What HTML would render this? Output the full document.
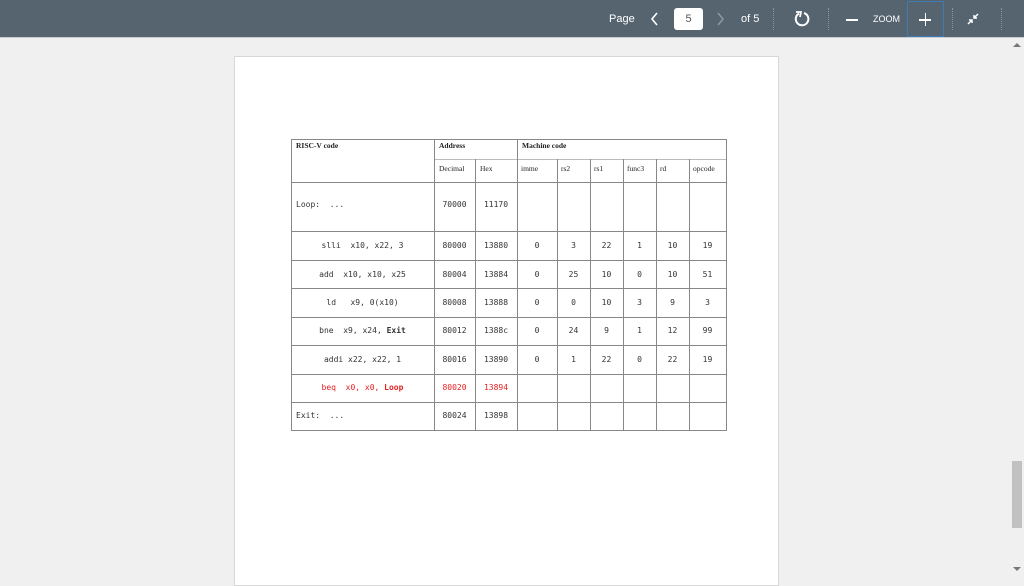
<!DOCTYPE html><html><head><style>
*{margin:0;padding:0;box-sizing:border-box}
body{width:1024px;height:576px;overflow:hidden;background:#f0f0f0;font-family:"Liberation Sans",sans-serif;position:relative}
.tb{position:absolute;left:0;top:0;width:1024px;height:38px;background:#56646f;border-bottom:1px solid #c8cdd2}
.t{position:absolute;color:#fff;font-size:11px;top:13px}
.sep{position:absolute;top:8px;height:22px;border-left:1px dotted #8a959e}
.page{position:absolute;left:234px;top:56px;width:545px;height:530px;background:#fff;border:1px solid #d8d8d8}
.h{position:absolute;height:1px;background:#888}
.v{position:absolute;width:1px;background:#888}
.c{position:absolute;font-size:8px;color:#333;text-align:center;white-space:pre;font-family:"DejaVu Sans Mono","Liberation Mono",monospace}
.s{position:absolute;font-size:7.5px;color:#222;font-family:"Liberation Serif",serif}
.b{font-weight:bold}
.r{color:#e82020}
</style></head><body>
<div class="tb">
<div class="t" style="left:609px">Page</div>
<svg style="position:absolute;left:650px;top:12px" width="10" height="14"><path d="M7 1L2 7L7 13" stroke="#fff" stroke-width="1.6" fill="none"/></svg>
<div style="position:absolute;left:674px;top:8px;width:29px;height:22px;background:#fff;border-radius:3px;font-size:11px;color:#555;text-align:center;line-height:22px">5</div>
<svg style="position:absolute;left:716px;top:12px" width="10" height="14"><path d="M2 1L7 7L2 13" stroke="#8c979f" stroke-width="1.6" fill="none"/></svg>
<div class="t" style="left:741px">of 5</div>
<div class="sep" style="left:773px"></div>
<svg style="position:absolute;left:793px;top:10px" width="18" height="18"><path d="M6 3.5A6.3 6.3 0 1 0 11 3" stroke="#fff" stroke-width="2" fill="none"/><path d="M3 2L8 2L7 7" stroke="#fff" stroke-width="1.8" fill="none"/></svg>
<div class="sep" style="left:828px"></div>
<div style="position:absolute;left:846px;top:19px;width:12px;height:1.5px;background:#fff"></div>
<div class="t" style="left:873px;font-size:9px;top:14px">ZOOM</div>
<div style="position:absolute;left:907px;top:1px;width:37px;height:36px;border:1px solid #3e7bb3"></div>
<div style="position:absolute;left:919px;top:19px;width:12px;height:1.5px;background:#fff"></div>
<div style="position:absolute;left:924.5px;top:13px;width:1.5px;height:13px;background:#fff"></div>
<div class="sep" style="left:952px"></div>
<svg style="position:absolute;left:966px;top:12px" width="14" height="14"><path d="M2 12L6 8M3 8H6V11M12 2L8 6M8 3V6H11" stroke="#fff" stroke-width="1.5" fill="none"/></svg>
<div class="sep" style="left:1001px"></div>
</div>
<div style="position:absolute;left:1012px;top:461px;width:10px;height:67px;background:#c1c1c1"></div>
<svg style="position:absolute;left:1013px;top:42px" width="8" height="6"><path d="M0 5L4 1L8 5Z" fill="#777"/></svg>
<svg style="position:absolute;left:1013px;top:566px" width="8" height="6"><path d="M0 1L4 5L8 1Z" fill="#777"/></svg>
<div class="page"></div>
<div class="h" style="left:291px;top:139px;width:436px"></div>
<div class="h" style="left:434px;top:159px;width:293px;background:#bbb"></div>
<div class="h" style="left:291px;top:182px;width:436px"></div>
<div class="h" style="left:291px;top:231px;width:436px"></div>
<div class="h" style="left:291px;top:260px;width:436px"></div>
<div class="h" style="left:291px;top:288px;width:436px"></div>
<div class="h" style="left:291px;top:317px;width:436px"></div>
<div class="h" style="left:291px;top:345px;width:436px"></div>
<div class="h" style="left:291px;top:374px;width:436px"></div>
<div class="h" style="left:291px;top:402px;width:436px"></div>
<div class="h" style="left:291px;top:430px;width:436px"></div>
<div class="v" style="left:291px;top:139px;height:292px"></div>
<div class="v" style="left:434px;top:139px;height:292px"></div>
<div class="v" style="left:475px;top:159px;height:272px"></div>
<div class="v" style="left:517px;top:139px;height:292px"></div>
<div class="v" style="left:557px;top:159px;height:272px"></div>
<div class="v" style="left:590px;top:159px;height:272px"></div>
<div class="v" style="left:623px;top:159px;height:272px"></div>
<div class="v" style="left:656px;top:159px;height:272px"></div>
<div class="v" style="left:689px;top:159px;height:272px"></div>
<div class="v" style="left:726px;top:139px;height:292px"></div>
<div class="s b" style="left:296px;top:141px">RISC-V code</div>
<div class="s b" style="left:439px;top:141px">Address</div>
<div class="s b" style="left:522px;top:141px">Machine code</div>
<div class="s" style="left:439px;top:164px">Decimal</div>
<div class="s" style="left:480px;top:164px">Hex</div>
<div class="s" style="left:521px;top:164px">imme</div>
<div class="s" style="left:561px;top:164px">rs2</div>
<div class="s" style="left:594px;top:164px">rs1</div>
<div class="s" style="left:627px;top:164px">func3</div>
<div class="s" style="left:660px;top:164px">rd</div>
<div class="s" style="left:693px;top:164px">opcode</div>
<div class="c" style="left:296px;top:200px;text-align:left">Loop:  ...</div>
<div class="c" style="left:434px;top:200px;width:41px">70000</div><div class="c" style="left:475px;top:200px;width:42px">11170</div>

<div class="c" style="left:291px;top:241px;width:143px">slli  x10, x22, 3</div>
<div class="c" style="left:434px;top:241px;width:41px">80000</div><div class="c" style="left:475px;top:241px;width:42px">13880</div>
<div class="c" style="left:517px;top:241px;width:40px">0</div><div class="c" style="left:557px;top:241px;width:33px">3</div><div class="c" style="left:590px;top:241px;width:33px">22</div><div class="c" style="left:623px;top:241px;width:33px">1</div><div class="c" style="left:656px;top:241px;width:33px">10</div><div class="c" style="left:689px;top:241px;width:37px">19</div>

<div class="c" style="left:291px;top:270px;width:143px">add  x10, x10, x25</div>
<div class="c" style="left:434px;top:270px;width:41px">80004</div><div class="c" style="left:475px;top:270px;width:42px">13884</div>
<div class="c" style="left:517px;top:270px;width:40px">0</div><div class="c" style="left:557px;top:270px;width:33px">25</div><div class="c" style="left:590px;top:270px;width:33px">10</div><div class="c" style="left:623px;top:270px;width:33px">0</div><div class="c" style="left:656px;top:270px;width:33px">10</div><div class="c" style="left:689px;top:270px;width:37px">51</div>

<div class="c" style="left:291px;top:298px;width:143px">ld   x9, 0(x10)</div>
<div class="c" style="left:434px;top:298px;width:41px">80008</div><div class="c" style="left:475px;top:298px;width:42px">13888</div>
<div class="c" style="left:517px;top:298px;width:40px">0</div><div class="c" style="left:557px;top:298px;width:33px">0</div><div class="c" style="left:590px;top:298px;width:33px">10</div><div class="c" style="left:623px;top:298px;width:33px">3</div><div class="c" style="left:656px;top:298px;width:33px">9</div><div class="c" style="left:689px;top:298px;width:37px">3</div>

<div class="c" style="left:291px;top:326px;width:143px">bne  x9, x24, <b>Exit</b></div>
<div class="c" style="left:434px;top:326px;width:41px">80012</div><div class="c" style="left:475px;top:326px;width:42px">1388c</div>
<div class="c" style="left:517px;top:326px;width:40px">0</div><div class="c" style="left:557px;top:326px;width:33px">24</div><div class="c" style="left:590px;top:326px;width:33px">9</div><div class="c" style="left:623px;top:326px;width:33px">1</div><div class="c" style="left:656px;top:326px;width:33px">12</div><div class="c" style="left:689px;top:326px;width:37px">99</div>

<div class="c" style="left:291px;top:355px;width:143px">addi x22, x22, 1</div>
<div class="c" style="left:434px;top:355px;width:41px">80016</div><div class="c" style="left:475px;top:355px;width:42px">13890</div>
<div class="c" style="left:517px;top:355px;width:40px">0</div><div class="c" style="left:557px;top:355px;width:33px">1</div><div class="c" style="left:590px;top:355px;width:33px">22</div><div class="c" style="left:623px;top:355px;width:33px">0</div><div class="c" style="left:656px;top:355px;width:33px">22</div><div class="c" style="left:689px;top:355px;width:37px">19</div>

<div class="c r" style="left:291px;top:383px;width:143px">beq  x0, x0, <b>Loop</b></div>
<div class="c r" style="left:434px;top:383px;width:41px">80020</div><div class="c r" style="left:475px;top:383px;width:42px">13894</div>

<div class="c" style="left:296px;top:411px;text-align:left">Exit:  ...</div>
<div class="c" style="left:434px;top:411px;width:41px">80024</div><div class="c" style="left:475px;top:411px;width:42px">13898</div>
</body></html>
